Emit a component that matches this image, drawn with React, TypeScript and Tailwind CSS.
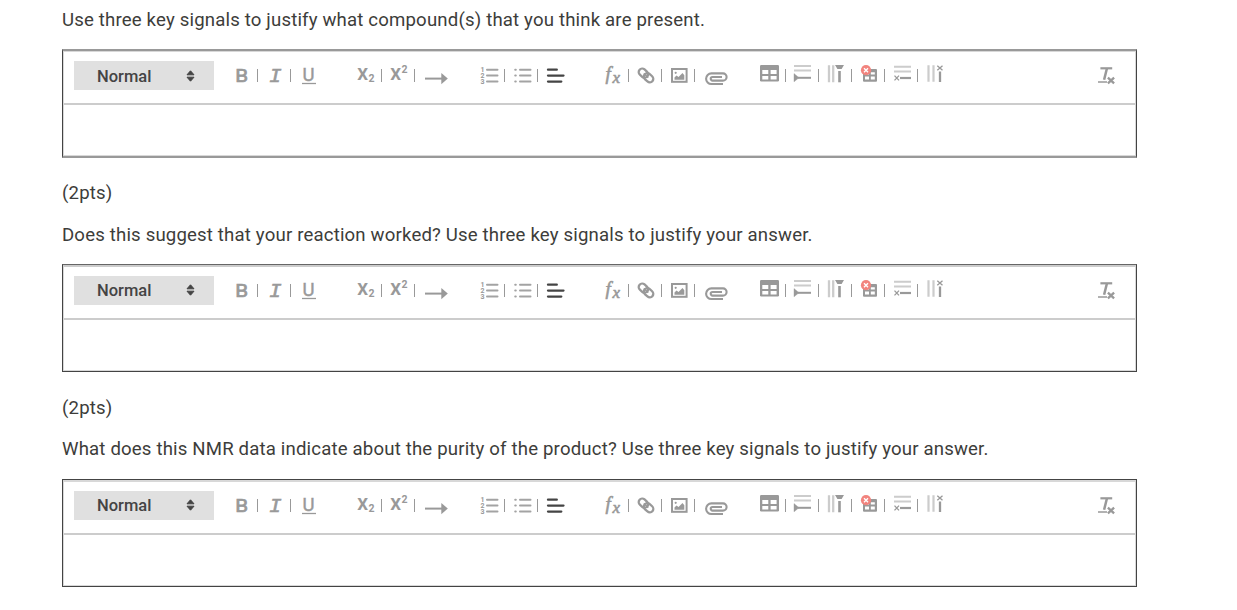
import type { ReactNode } from 'react';

interface Question {
  text: string;
  points?: string;
  // spacing and frame per block, the rows do not share one exact rhythm
  className: string;
  textClass: string;
  frame: string;
  inner: string;
  labelClass: string;
}

const QUESTIONS: Question[] = [
  {
    text: 'Use three key signals to justify what compound(s) that you think are present.',
    points: '(2pts)',
    className: 'h-[215px]',
    textClass: 'pt-[8px]',
    frame: 'h-[109px] border-y-2 border-y-[#999]',
    inner: 'border-t',
    labelClass: 'pt-px',
  },
  {
    text: 'Does this suggest that your reaction worked? Use three key signals to justify your answer.',
    points: '(2pts)',
    className: 'h-[215px]',
    textClass: 'pt-[8px]',
    frame: 'h-[108px] mb-px border-y border-t-[#666] border-b-[#444]',
    inner: 'border-t-2 border-t-[#ccc]',
    labelClass: 'pb-px',
  },
  {
    text: 'What does this NMR data indicate about the purity of the product? Use three key signals to justify your answer.',
    className: 'h-[180px]',
    textClass: 'pt-[7px]',
    frame: 'h-[108px] border-y border-y-[#444]',
    inner: 'border-t-2',
    labelClass: 'pb-px',
  },
];

const Icon = ({ children }: { children: ReactNode }) => (
  <svg
    className="w-[26px] h-[26px] flex-shrink-0 overflow-visible"
    viewBox="0 0 26 26"
    fill="none"
    stroke="#999"
    strokeWidth="2"
  >
    {children}
  </svg>
);

const Separator = () => <span className="w-px h-[13px] mx-[3px] mt-px flex-shrink-0 bg-[#999]" />;

const Group = ({ icons, className }: { icons: ReactNode[]; className: string }) => (
  <div className={`flex items-center ${className}`}>
    {icons.map((icon, i) => (
      <div key={i} className="flex items-center">
        {i > 0 && <Separator />}
        <Icon>{icon}</Icon>
      </div>
    ))}
  </div>
);

const SANS = 'Roboto, sans-serif';
const SERIF = '"Liberation Serif", serif';
const MONO = '"Liberation Mono", monospace';

// ============ Text style ============
const bold = <text x="7.2" y="20.2" fontSize="18.5" textLength="13" lengthAdjust="spacingAndGlyphs" fontFamily={SANS} fill="#999" stroke="#999" strokeWidth="0.7">B</text>;

const italic = <text x="8" y="20.2" fontSize="21" fontStyle="italic" fontFamily={MONO} fill="#999" stroke="#999" strokeWidth="0.6">I</text>;

const underline = (
  <>
    <text x="8.6" y="19" fontSize="18.5" fontFamily={SANS} fill="#999" stroke="#999" strokeWidth="0.4">U</text>
    <path d="M8 21.5h14" strokeWidth="1.3" />
  </>
);

// ============ Scripts ============
const subscript = (
  <>
    <text x="5.2" y="18" fontSize="17" fontWeight="700" fontFamily={SANS} fill="#999" stroke="none">X</text>
    <text x="16.6" y="19.8" fontSize="10.5" fontWeight="700" fontFamily={SANS} fill="#999" stroke="none">2</text>
  </>
);

const superscript = (
  <>
    <text x="5.2" y="18" fontSize="17" fontWeight="700" fontFamily={SANS} fill="#999" stroke="none">X</text>
    <text x="16.6" y="11" fontSize="10.5" fontWeight="700" fontFamily={SANS} fill="#999" stroke="none">2</text>
  </>
);

const arrow = (
  <>
    <path d="M7 16.6h18" />
    <path d="M23.3 11l6.5 5.6-6.5 5.6z" fill="#999" stroke="none" />
  </>
);

// ============ Lists ============
const ordered = (
  <>
    <path d="M12 7.7h10.5M12 13.6h10.5M12 19.6h10.5" stroke="#a3a3a3" strokeLinecap="round" />
    {['1', '2', '3'].map((n, i) => (
      <text key={n} x="5.4" y={10 + i * 6} fontSize="7" fontWeight="700" fontFamily={SANS} fill="#999" stroke="none">{n}</text>
    ))}
  </>
);

const bullets = (
  <>
    <path d="M12 7.7h10.5M12 13.6h10.5M12 19.6h10.5" stroke="#a3a3a3" strokeLinecap="round" />
    <path d="M7.2 7.7h.6M7.2 13.6h.6M7.2 19.6h.6" stroke="#a3a3a3" strokeLinecap="round" />
  </>
);

const align = <path d="M7 7.7h8.8M7 13.6h15.5M7 19.6h13.3" stroke="#444" strokeWidth="2.3" strokeLinecap="round" />;

// ============ Inserts ============
const formula = (
  <>
    <text x="6.6" y="18.2" fontSize="19" fontStyle="italic" fontFamily={SERIF} fill="#999" stroke="#999" strokeWidth="0.6">f</text>
    <text x="13.6" y="21.4" fontSize="17" fontStyle="italic" fontFamily={SERIF} fill="#999" stroke="#999" strokeWidth="0.6">x</text>
  </>
);

const link = (
  <g transform="rotate(42 14 13.6)" strokeWidth="2.3">
    <rect x="5.3" y="10" width="10.2" height="7" rx="3.5" />
    <rect x="12.3" y="10" width="10.2" height="7" rx="3.5" />
    <path d="M11 13.5h6" strokeWidth="1.6" />
  </g>
);

const image = (
  <>
    <rect x="7" y="7" width="14.6" height="12.8" />
    <circle cx="10.7" cy="10.8" r="1.1" fill="#999" stroke="none" />
    <path d="M9.5 17.7v-2.2l2-2 2 1.5 4-4 1.8 2.3v4.4z" fill="#999" stroke="none" />
  </>
);

const attachment = (
  <path
    d="M25 22H13.4a5.3 5.3 0 0 1 0-10.6H25a3.6 3.6 0 0 1 0 7.2H14.5a1.8 1.8 0 0 1 0-3.6H24"
    strokeWidth="2.1"
  />
);

// ============ Tables ============
const table = (
  <>
    <rect x="4" y="3" width="19" height="16.5" rx="1.2" fill="#999" stroke="none" />
    <path d="M6.3 8h6v4h-6zM14.6 8h6v4h-6zM6.3 13.9h6v3.5h-6zM14.6 13.9h6v3.5h-6z" fill="#fff" stroke="none" />
  </>
);

const addRow = (
  <>
    <path d="M5 4h17M5 8.4h17" stroke="#ccc" />
    <path d="M5 11.6l5 4.1-5 4.1z" fill="#999" stroke="#999" strokeWidth="0.4" />
    <path d="M9 15.8h13" />
  </>
);

const addColumn = (
  <>
    <path d="M7 3.2v17M11.2 3.2v17" stroke="#ccc" strokeWidth="2.3" />
    <path d="M13 3h9l-2.4 4h-4.2z" fill="#999" stroke="none" />
    <path d="M17.5 9v11.3" strokeWidth="2.6" />
  </>
);

const deleteTable = (
  <>
    <rect x="8" y="7" width="14" height="12.7" rx="1" fill="#999" stroke="none" />
    <path d="M10 10.2h4v2.4h-4zM15.8 10.2h4v2.4h-4zM10 14.6h4v2.8h-4zM15.8 14.6h4v2.8h-4z" fill="#fff" stroke="none" />
    <circle cx="11" cy="8.2" r="5.1" fill="#f2847e" stroke="none" />
    <path d="M9 6.2l4 4M13 6.2l-4 4" stroke="#fff" strokeWidth="1.4" />
  </>
);

const deleteRow = (
  <>
    <path d="M6 4.7h17M6 9.5h17" stroke="#ccc" />
    <path d="M6.5 13.6l4.5 4.8M11 13.6l-4.5 4.8" strokeWidth="1.3" />
    <path d="M12 16h11" strokeWidth="2.2" />
  </>
);

const deleteColumn = (
  <>
    <path d="M7.5 3.2v16.5M12.5 3.2v16.5" stroke="#ccc" strokeWidth="2.2" />
    <path d="M16.3 3.7l5.2 4.6M21.5 3.7l-5.2 4.6" strokeWidth="1.3" />
    <path d="M19 9.5v10.5" strokeWidth="2.3" />
  </>
);

const clean = (
  <>
    <path d="M9.4 6.3h11.8" strokeWidth="2.2" />
    <path d="M16 6.3l-2.9 11.4" strokeWidth="2.5" />
    <path d="M7 20h9" strokeWidth="1.5" />
    <path d="M16.9 15.6l6.2 5.8M23.1 15.6l-6.2 5.8" strokeWidth="2.3" />
  </>
);

const Toolbar = ({ labelClass }: { labelClass: string }) => (
  <div className="flex h-[51px] pl-[10px] pt-[9px]">
    <div className={`flex items-center w-[140px] h-[29px] pl-[23px] pr-[19px] justify-between bg-[#e0e0e0] text-[#444] ${labelClass}`}>
      <span className="text-[16.5px] leading-[25px] font-medium tracking-normal">Normal</span>
      <svg className="w-[9px] h-[12px]" viewBox="0 0 9 12" fill="#444">
        <path d="M1 4.8h7L4.5.8zM1 7.2h7l-3.5 4z" stroke="#444" strokeLinejoin="round" strokeWidth="1" />
      </svg>
    </div>
    <div className="flex flex-1 h-[26px] mt-px">
      <Group className="ml-[14px]" icons={[bold, italic, underline]} />
      <Group className="ml-[32px]" icons={[subscript, superscript, arrow]} />
      <Group className="ml-[31px]" icons={[ordered, bullets, align]} />
      <Group className="ml-[32px]" icons={[formula, link, image, attachment]} />
      <Group className="ml-[32px]" icons={[table, addRow, addColumn, deleteTable, deleteRow, deleteColumn]} />
      <Group className="ml-auto mr-[18px]" icons={[clean]} />
    </div>
  </div>
);

const Editor = ({ question }: { question: Question }) => (
  <div className={`w-[1075px] border-x border-x-[#444] ${question.frame}`}>
    <div className={`h-full border-x border-b border-[#d8d8d8] ${question.inner}`}>
      <Toolbar labelClass={question.labelClass} />
      <div className="border-t-2 border-[#ccc]" />
    </div>
  </div>
);

export default function App() {
  return (
    <main className="h-[610px] overflow-hidden bg-white pl-[62px] font-[Roboto,sans-serif] text-[18.6px] leading-[25px] tracking-[0.17px] text-[#3d3d3a]">
      {QUESTIONS.map((question) => (
        <section key={question.text} className={question.className}>
          <p className={`h-[49px] whitespace-nowrap ${question.textClass}`}>{question.text}</p>
          <Editor question={question} />
          {question.points && <p className="pt-[23px]">{question.points}</p>}
        </section>
      ))}
    </main>
  );
}
